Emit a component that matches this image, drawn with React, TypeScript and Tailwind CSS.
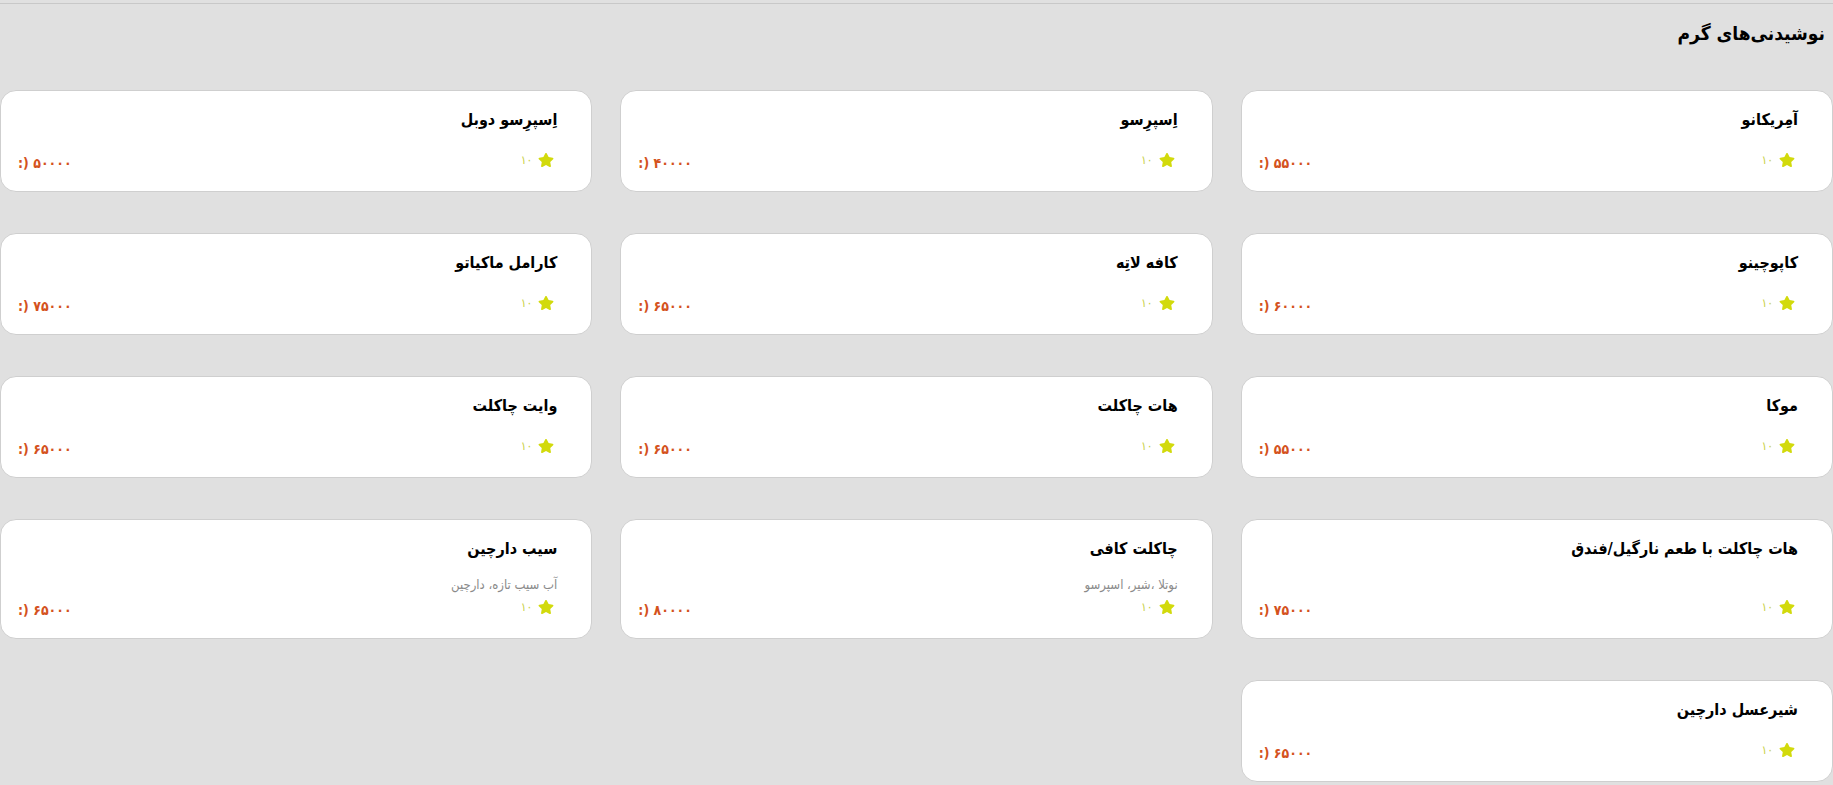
import { FaStar } from "react-icons/fa";

type Item = {
  name: string;
  price: string;
  desc?: string;
};

const items: Item[] = [
  { name: "آمِریکانو", price: "۵۵۰۰۰" },
  { name: "اِسپرِسو", price: "۴۰۰۰۰" },
  { name: "اِسپرِسو دوبل", price: "۵۰۰۰۰" },
  { name: "کاپوچینو", price: "۶۰۰۰۰" },
  { name: "کافه لاتِه", price: "۶۵۰۰۰" },
  { name: "کارامل ماکیاتو", price: "۷۵۰۰۰" },
  { name: "موکا", price: "۵۵۰۰۰" },
  { name: "هات چاکلت", price: "۶۵۰۰۰" },
  { name: "وایت چاکلت", price: "۶۵۰۰۰" },
  { name: "هات چاکلت با طعم نارگیل/فندق", price: "۷۵۰۰۰" },
  { name: "چاکلت کافی", price: "۸۰۰۰۰", desc: "نوتلا ،شیر، اسپرسو" },
  { name: "سیب دارچین", price: "۶۵۰۰۰", desc: "آب سیب تازه، دارچین" },
  { name: "شیرعسل دارچین", price: "۶۵۰۰۰" },
];

const MenuCard = ({ item }: { item: Item }) => {
  return (
    <div className="flex flex-col bg-white border border-[#cfcfcf] rounded-2xl pt-[17px] pb-[21px] pr-[34px] pl-[17px]">
      <h3 className="text-base leading-6 font-bold text-black">{item.name}</h3>
      <div className={`mt-auto ${item.desc ? "pt-[15px]" : "pt-[18px]"}`}>
        {item.desc && (
          <p className="text-[13px] leading-[18px] text-[#8a8a8a] mb-[3px]">
            {item.desc}
          </p>
        )}
        <div className="flex items-center justify-between h-5">
          <div className="flex items-center gap-[6px] mr-[3px]">
            <FaStar className="text-[#d2da0c]" size={16} />
            <span className="text-xs text-[#c8cf45]">۱۰</span>
          </div>
          <span className="text-sm leading-5 font-bold text-[#d4521d] mt-[5px] [direction:ltr] [unicode-bidi:bidi-override]">
            :) {item.price}
          </span>
        </div>
      </div>
    </div>
  );
};

const App = () => {
  return (
    <div
      dir="rtl"
      className="min-h-screen bg-[#e0e0e0] font-['DejaVu_Sans_Condensed','DejaVu_Sans',sans-serif]"
    >
      <div className="h-[4px] border-b border-[#c8c8c8]" />
      <h2 className="pt-[15px] pr-[8px] text-[19px] leading-7 font-bold text-black mb-[43px]">
        نوشیدنی‌های گرم
      </h2>
      <div className="grid grid-cols-3 gap-x-7 gap-y-[41px]">
        {items.map((item) => (
          <MenuCard key={item.name} item={item} />
        ))}
      </div>
    </div>
  );
};

export default App;
